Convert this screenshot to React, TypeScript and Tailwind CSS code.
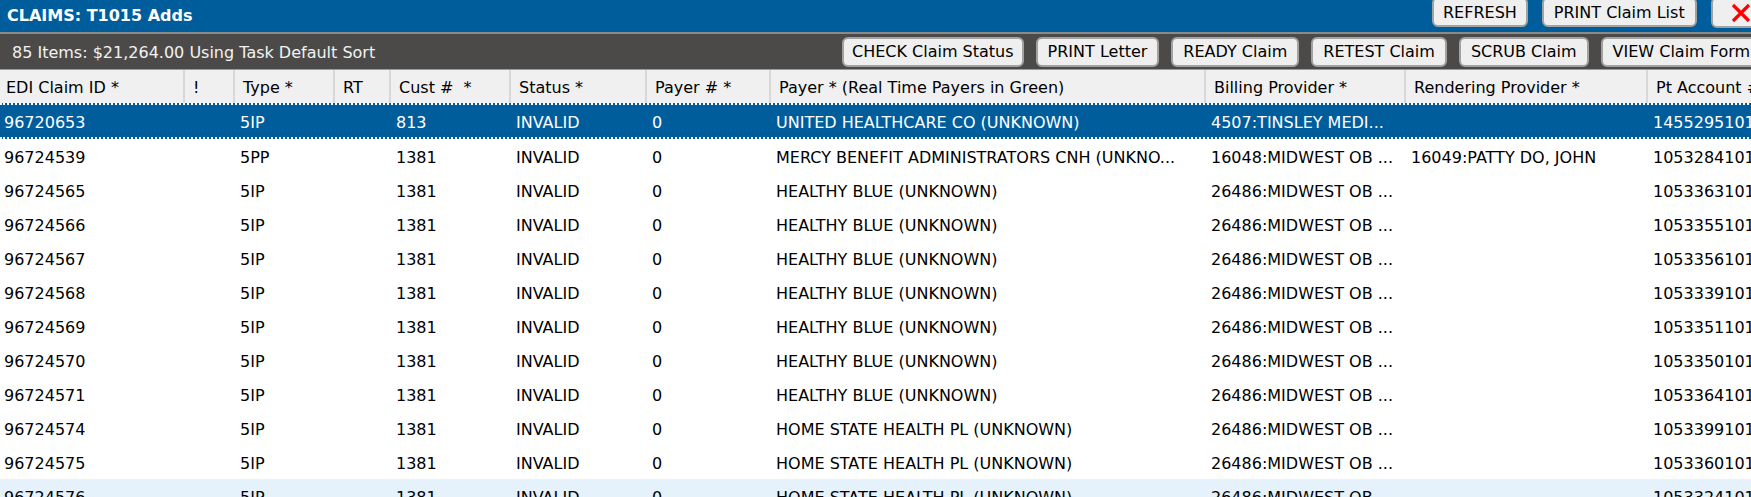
import React from "react";

type Row = {
  id: string;
  type: string;
  cust: string;
  status: string;
  payerNo: string;
  payer: string;
  billing: string;
  rendering: string;
  account: string;
};

const rows: Row[] = [
  { id: "96720653", type: "5IP", cust: "813", status: "INVALID", payerNo: "0", payer: "UNITED HEALTHCARE CO (UNKNOWN)", billing: "4507:TINSLEY MEDI...", rendering: "", account: "14552951016" },
  { id: "96724539", type: "5PP", cust: "1381", status: "INVALID", payerNo: "0", payer: "MERCY BENEFIT ADMINISTRATORS CNH (UNKNO...", billing: "16048:MIDWEST OB ...", rendering: "16049:PATTY DO, JOHN", account: "10532841016" },
  { id: "96724565", type: "5IP", cust: "1381", status: "INVALID", payerNo: "0", payer: "HEALTHY BLUE (UNKNOWN)", billing: "26486:MIDWEST OB ...", rendering: "", account: "10533631016" },
  { id: "96724566", type: "5IP", cust: "1381", status: "INVALID", payerNo: "0", payer: "HEALTHY BLUE (UNKNOWN)", billing: "26486:MIDWEST OB ...", rendering: "", account: "10533551016" },
  { id: "96724567", type: "5IP", cust: "1381", status: "INVALID", payerNo: "0", payer: "HEALTHY BLUE (UNKNOWN)", billing: "26486:MIDWEST OB ...", rendering: "", account: "10533561016" },
  { id: "96724568", type: "5IP", cust: "1381", status: "INVALID", payerNo: "0", payer: "HEALTHY BLUE (UNKNOWN)", billing: "26486:MIDWEST OB ...", rendering: "", account: "10533391016" },
  { id: "96724569", type: "5IP", cust: "1381", status: "INVALID", payerNo: "0", payer: "HEALTHY BLUE (UNKNOWN)", billing: "26486:MIDWEST OB ...", rendering: "", account: "10533511016" },
  { id: "96724570", type: "5IP", cust: "1381", status: "INVALID", payerNo: "0", payer: "HEALTHY BLUE (UNKNOWN)", billing: "26486:MIDWEST OB ...", rendering: "", account: "10533501016" },
  { id: "96724571", type: "5IP", cust: "1381", status: "INVALID", payerNo: "0", payer: "HEALTHY BLUE (UNKNOWN)", billing: "26486:MIDWEST OB ...", rendering: "", account: "10533641016" },
  { id: "96724574", type: "5IP", cust: "1381", status: "INVALID", payerNo: "0", payer: "HOME STATE HEALTH PL (UNKNOWN)", billing: "26486:MIDWEST OB ...", rendering: "", account: "10533991016" },
  { id: "96724575", type: "5IP", cust: "1381", status: "INVALID", payerNo: "0", payer: "HOME STATE HEALTH PL (UNKNOWN)", billing: "26486:MIDWEST OB ...", rendering: "", account: "10533601016" },
  { id: "96724576", type: "5IP", cust: "1381", status: "INVALID", payerNo: "0", payer: "HOME STATE HEALTH PL (UNKNOWN)", billing: "26486:MIDWEST OB ...", rendering: "", account: "10533241016" },
];

const headers = [
  "EDI Claim ID *",
  "!",
  "Type *",
  "RT",
  "Cust #  *",
  "Status *",
  "Payer # *",
  "Payer * (Real Time Payers in Green)",
  "Billing Provider *",
  "Rendering Provider *",
  "Pt Account #",
];

const cols =
  "grid grid-cols-[183px_50px_100px_56px_120px_136px_124px_435px_200px_242px_220px]";

function ToolButton({ label, pad = "px-[10px]" }: { label: string; pad?: string }) {
  return (
    <button
      className={`h-[30px] shrink-0 whitespace-nowrap rounded-[6px] border-2 border-[#a2a2a2] bg-[#efefef] pt-[1px] text-[16px] leading-none text-black ${pad}`}
    >
      {label}
    </button>
  );
}

export default function App() {
  return (
    <div className="h-[497px] w-[1751px] overflow-hidden bg-white font-['DejaVu_Sans',sans-serif] text-[16px] text-black">
      <div className="w-[1800px]">
        {/* Title bar */}
        <div className="flex h-[34px] items-end border-b-2 border-[#8a8a8a] bg-[#005d9c] pb-[4px]">
          <div className="w-[1432px] shrink-0 self-center pl-[7px] pt-[3px] font-bold text-white">
            CLAIMS: T1015 Adds
          </div>
          <div className="flex h-[31px] gap-[14px]">
            <ToolButton label="REFRESH" pad="px-[9px]" />
            <ToolButton label="PRINT Claim List" />
            <button className="flex h-[31px] w-[64px] shrink-0 items-center rounded-[6px] border-2 border-[#a2a2a2] bg-[#efefef] pl-[18px]">
              <svg width="20" height="20" viewBox="0 0 20 20">
                <path d="M2 2 L18 18 M18 2 L2 18" stroke="#ff0000" strokeWidth="3.2" />
              </svg>
            </button>
          </div>
        </div>

        {/* Summary / actions bar */}
        <div className="flex h-[36px] items-center border-b border-[#9b9b9b] bg-[#4b4a48]">
          <div className="w-[842px] shrink-0 pl-[12px] pt-[3px] text-[#f2f2f2]">
            85 Items: $21,264.00 Using Task Default Sort
          </div>
          <div className="flex gap-[12px]">
            <ToolButton label="CHECK Claim Status" pad="px-[8px]" />
            <ToolButton label="PRINT Letter" />
            <ToolButton label="READY Claim" />
            <ToolButton label="RETEST Claim" />
            <ToolButton label="SCRUB Claim" />
            <ToolButton label="VIEW Claim Form" />
          </div>
        </div>

        {/* Grid header */}
        <div className={`${cols} h-[33px] bg-[#f0f0f0]`}>
          {headers.map((h, i) => (
            <div
              key={h}
              className={`flex items-center whitespace-pre pt-[3px] ${
                i === 0 ? "pl-[6px]" : "border-l-2 border-[#d8d8d8] pl-[8px]"
              }`}
            >
              {h}
            </div>
          ))}
        </div>

        {/* Grid rows */}
        {rows.map((r, i) => {
          const selected = i === 0;
          const hovered = i === rows.length - 1;
          const cells = [r.id, "", r.type, "", r.cust, r.status, r.payerNo, r.payer, r.billing, r.rendering, r.account];
          return (
            <div
              key={r.id}
              className={`${cols} ${
                selected
                  ? "h-[36px] border-y-2 border-dotted border-white bg-[#005d9c] text-white"
                  : hovered
                  ? "h-[34px] bg-[#e5f1fb]"
                  : "h-[34px] bg-white"
              }`}
            >
              {cells.map((c, j) => (
                <div
                  key={j}
                  className={`flex items-center overflow-hidden whitespace-nowrap pt-[3px] ${
                    j === 0 ? "pl-[4px]" : "pl-[7px]"
                  }`}
                >
                  {c}
                </div>
              ))}
            </div>
          );
        })}
      </div>
    </div>
  );
}
